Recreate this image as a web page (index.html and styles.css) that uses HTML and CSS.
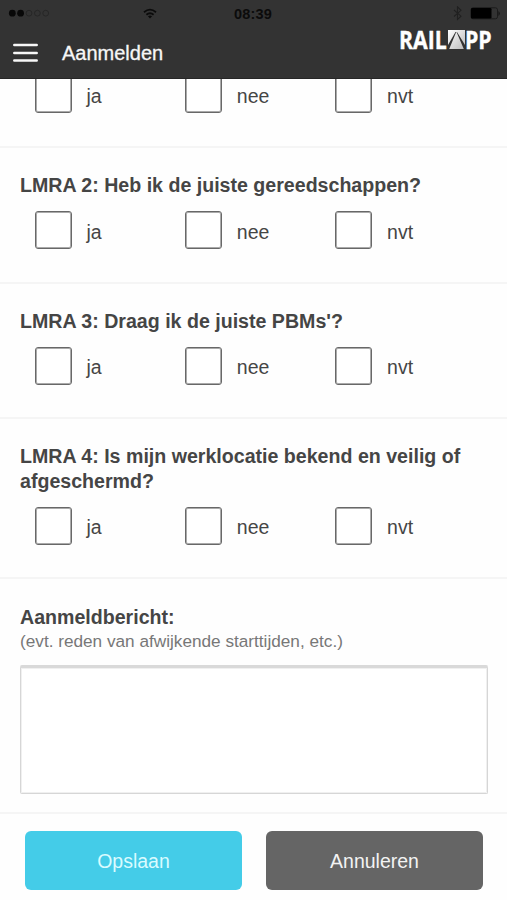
FILE: index.html
```html
<!DOCTYPE html>
<html lang="nl">
<head>
<meta charset="utf-8">
<title>Aanmelden</title>
<link rel="stylesheet" href="styles.css">
</head>
<body>
<header class="header">
  <div class="status">
    <svg class="signal" width="44" height="10" viewBox="0 0 44 10">
      <g fill="#080808"><circle cx="4.3" cy="4.2" r="3.4"/><circle cx="12.6" cy="4.2" r="3.4"/></g>
      <g fill="none" stroke="#262626"><circle cx="21" cy="4.2" r="2.9"/><circle cx="29.4" cy="4.2" r="2.9"/><circle cx="37.7" cy="4.2" r="2.9"/></g>
    </svg>
    <svg class="wifi" width="14" height="11" viewBox="0 0 14 11" fill="none" stroke="#0b0b0b" stroke-width="1.8">
      <path d="M1 4.2Q7-.9 13 4.2"/><path d="M3.4 6.7Q7 3.7 10.6 6.7"/><path d="M7 10.5 4.9 8.3Q7 6.8 9.1 8.3Z" fill="#0b0b0b" stroke="none"/>
    </svg>
    <span class="time">08:39</span>
    <svg class="power" width="50" height="16" viewBox="0 0 50 16">
      <path d="M3 4 10 10.2 6.5 13.5V.8L10 4.3 3 10.5" fill="none" stroke="#202020" stroke-width="1.1"/>
      <rect x="20" y="1.8" width="26.5" height="11" rx="2" fill="none" stroke="#1b1b1b"/>
      <rect x="20" y="2" width="20.5" height="10.6" rx="1.3" fill="#000"/>
      <path d="M47.5 5Q50 7.5 47.5 10Z" fill="#111"/>
    </svg>
  </div>
  <div class="bar">
    <svg class="menu" width="25" height="19" viewBox="0 0 25 19" stroke="#f7f7f7" stroke-width="2.5" stroke-linecap="round"><path d="M1.3 2H23.7M1.3 9.9H23.7M1.3 17.6H23.7"/></svg>
    <h1 class="heading">Aanmelden</h1>
    <div class="logo">
      <span class="logo-rail">RAIL</span>
      <svg width="17" height="19" viewBox="0 0 17 19">
        <defs><linearGradient id="track" x2="1" y2="1"><stop stop-color="#fff"/><stop offset="1" stop-color="#bbb"/></linearGradient></defs>
        <path d="M0 0H17V19H0Z" fill="url(#track)"/>
        <path d="M7.5 2 0 15V19H1.2L8.2 2ZM9 2 17 15V19H15.8L8.5 2Z" fill="#333"/>
      </svg>
      <span class="logo-pp">PP</span>
    </div>
  </div>
</header>
<main class="form">
  <section class="question question-cut">
    <div class="options"><label><i class="box"></i>ja</label><label><i class="box"></i>nee</label><label><i class="box"></i>nvt</label></div>
  </section>
  <section class="question">
    <h2 class="title">LMRA 2: Heb ik de juiste gereedschappen?</h2>
    <div class="options"><label><i class="box"></i>ja</label><label><i class="box"></i>nee</label><label><i class="box"></i>nvt</label></div>
  </section>
  <section class="question">
    <h2 class="title">LMRA 3: Draag ik de juiste PBMs'?</h2>
    <div class="options"><label><i class="box"></i>ja</label><label><i class="box"></i>nee</label><label><i class="box"></i>nvt</label></div>
  </section>
  <section class="question">
    <h2 class="title">LMRA 4: Is mijn werklocatie bekend en veilig of<br>afgeschermd?</h2>
    <div class="options"><label><i class="box"></i>ja</label><label><i class="box"></i>nee</label><label><i class="box"></i>nvt</label></div>
  </section>
  <section class="message">
    <h2 class="title title-message">Aanmeldbericht:</h2>
    <p class="hint">(evt. reden van afwijkende starttijden, etc.)</p>
    <textarea class="input" aria-label="Aanmeldbericht"></textarea>
  </section>
  <div class="actions">
    <button class="button save">Opslaan</button>
    <button class="button cancel">Annuleren</button>
  </div>
</main>
</body>
</html>
```
FILE: styles.css
```css
* { box-sizing: border-box; }
body {
  margin: 0;
  height: 900px;
  overflow: hidden;
  background: #fefefe;
  color: #454545;
  font-family: "Liberation Sans", Arial, sans-serif;
}
.header { height: 79px; background: #333; border-bottom: 1px solid #262626; }
.status {
  height: 27px;
  padding: 0 6px 0 8px;
  display: grid;
  grid-template-columns: 135px 91px 1fr auto;
  align-items: center;
}
.status svg { display: block; }
.time { color: #0b0b0b; font-size: 14.5px; font-weight: bold; letter-spacing: .2px; }
.bar { height: 51px; display: flex; align-items: center; padding: 0 14px 0 13px; }
.heading { margin: 0 auto 0 24px; padding-top: 2px; color: #f7f7f7; font-size: 20px; font-weight: normal; -webkit-text-stroke: .3px #f7f7f7; }
.logo { display: flex; align-items: center; height: 19px; margin-top: -26px; color: #fff; font: bold 25px/17px "Open Sans", sans-serif; -webkit-text-stroke: .4px #fff; }
.logo span { display: block; transform-origin: left center; transform: scaleX(.85); white-space: nowrap; padding-bottom: 1px; }
.logo-rail { width: 49px; }
.logo-pp { width: 28px; }
.logo svg { flex: none; }
.form { overflow: hidden; height: 821px; }
.question { padding: 25px 20px 34px; border-bottom: 2px solid #f5f5f5; height: 135.7px; }
.question:nth-child(4) { height: 160px; }
.question-cut { margin-top: -4px; padding-top: 0; height: 73px; }
.title { margin: 0 0 14px; font-size: 19.6px; line-height: 24.4px; font-weight: bold; white-space: nowrap; }
.options { display: grid; grid-template-columns: 150.3px 150.3px 1fr; padding-left: 14.5px; }
.options label { display: flex; align-items: center; gap: 15px; height: 37.5px; padding-top: 3px; font-size: 19.5px; line-height: 24px; }
.question-cut label { padding-top: 4px; }
.box { align-self: flex-start; margin-top: -3px; width: 37px; height: 37.5px; border: 1px solid #686868; border-radius: 3px; background: #fff; box-shadow: inset 0 0 0 1px #aaa; }
.question-cut .box { margin-top: -4px; }
.message { height: 235px; padding: 26px 19px 0 20px; border-bottom: 2px solid #f5f5f5; }
.title-message { margin: 0; }
.hint { margin: -1px 0 12px; color: #777; font-size: 17.2px; line-height: 24px; white-space: nowrap; }
.input { display: block; width: 100%; height: 129px; border: 1px solid #d6d6d6; border-top: 3px solid #d9d9d9; border-radius: 2px; background: #fff; box-shadow: inset 0 0 0 1px #f0f0f0; resize: none; }
.actions { display: flex; gap: 24px; padding: 17px 24px 0 25px; }
.button { flex: 1; height: 59px; padding: 2px 0 0; border: 0; border-radius: 6px; color: #f3f3f3; font: 19.5px "Liberation Sans", Arial, sans-serif; }
.save { background: #44cce8; color: #d9fbff; }
.cancel { background: #656565; }
```
